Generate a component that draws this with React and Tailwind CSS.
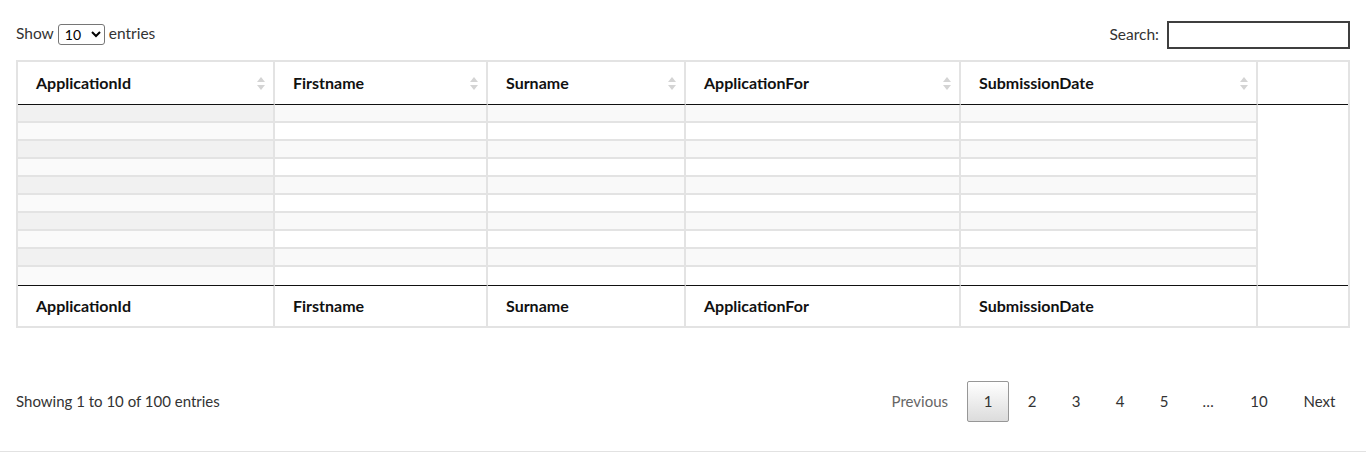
import React from "react";

const columns = [
  { name: "ApplicationId", width: "w-[257px]" },
  { name: "Firstname", width: "w-[213px]" },
  { name: "Surname", width: "w-[198px]" },
  { name: "ApplicationFor", width: "w-[275px]" },
  { name: "SubmissionDate", width: "w-[297px]" },
];

const SortIcon = () => (
  <svg width="8" height="13" viewBox="0 0 8 13" className="shrink-0">
    <path d="M4 0 L8 5 L0 5 Z" fill="#d4d4d4" />
    <path d="M4 13 L8 8 L0 8 Z" fill="#d4d4d4" />
  </svg>
);

const rows = Array.from({ length: 10 }, (_, i) => i);

const App = () => {
  return (
    <div
      className="w-[1366px] h-[452px] bg-white border-b border-[#e2e2e2] px-4 text-[#333]"
      style={{ fontFamily: "Lato, 'Liberation Sans', sans-serif" }}
    >
      {/* Top controls */}
      <div className="flex justify-between items-center pt-[21px] h-[49px] text-[15.5px]">
        <label className="flex items-center gap-[4px] -mt-[2px]">
          Show
          <select className="h-[21px] w-[47px] border border-[#767676] rounded-[3px] text-[14px] text-black px-[2px] bg-white">
            <option>10</option>
            <option>25</option>
            <option>50</option>
            <option>100</option>
          </select>
          entries
        </label>
        <label className="flex items-center gap-[8px]">
          Search:
          <input
            type="text"
            className="w-[183px] h-[28px] border-2 border-[#3f3f3f] outline-none"
          />
        </label>
      </div>

      {/* Table */}
      <div className="mt-[11px] border-2 border-[#e3e3e3]">
        <table className="w-full border-separate border-spacing-0 text-[16px]">
          <thead>
            <tr>
              {columns.map((c) => (
                <th
                  key={c.name}
                  className={`${c.width} h-[43px] border-r-2 border-[#e3e3e3] border-b border-b-[#111] text-left font-bold text-[#111] pl-[18px] pr-[8px]`}
                >
                  <div className="flex items-center justify-between">
                    <span>{c.name}</span>
                    <SortIcon />
                  </div>
                </th>
              ))}
              <th className="border-b border-b-[#111]"></th>
            </tr>
          </thead>
          <tbody>
            {rows.map((i) => (
              <tr key={i}>
                {columns.map((c, ci) => {
                  const odd = i % 2 === 0;
                  const bg =
                    ci === 0
                      ? odd
                        ? "bg-[#f1f1f1]"
                        : "bg-[#fafafa]"
                      : odd
                      ? "bg-[#f9f9f9]"
                      : "bg-white";
                  return (
                    <td
                      key={c.name}
                      className={`${bg} border-r-2 border-r-[#e3e3e3] p-0 ${
                        i < 9
                          ? "h-[18px] border-b-2 border-b-[#e3e3e3]"
                          : "h-[18px]"
                      }`}
                    ></td>
                  );
                })}
                {i === 0 && <td rowSpan={10} className="bg-white"></td>}
              </tr>
            ))}
          </tbody>
          <tfoot>
            <tr>
              {columns.map((c) => (
                <th
                  key={c.name}
                  className="h-[41px] border-r-2 border-[#e3e3e3] border-t border-t-[#111] text-left font-bold text-[#111] pl-[18px]"
                >
                  {c.name}
                </th>
              ))}
              <th className="border-t border-t-[#111]"></th>
            </tr>
          </tfoot>
        </table>
      </div>

      {/* Footer */}
      <div className="flex justify-between items-center mt-[53px] text-[14.5px]">
        <div className="text-[15px]">Showing 1 to 10 of 100 entries</div>
        <div className="flex items-center gap-[2px] text-[15px]">
          <span className="h-[41px] pl-4 pr-[17px] flex items-center text-[#666]">Previous</span>
          <span className="h-[41px] w-[42px] flex items-center justify-center border border-[#979797] rounded-[2px] bg-gradient-to-b from-white to-[#dcdcdc] text-[#333]">
            1
          </span>
          {["2", "3", "4", "5"].map((n) => (
            <span key={n} className="h-[41px] w-[42px] flex items-center justify-center">
              {n}
            </span>
          ))}
          <span className="h-[41px] w-[42px] flex items-center justify-center">…</span>
          <span className="h-[41px] w-[56px] flex items-center justify-center">10</span>
          <span className="h-[41px] w-[61px] flex items-center justify-center">Next</span>
        </div>
      </div>
    </div>
  );
};

export default App;
